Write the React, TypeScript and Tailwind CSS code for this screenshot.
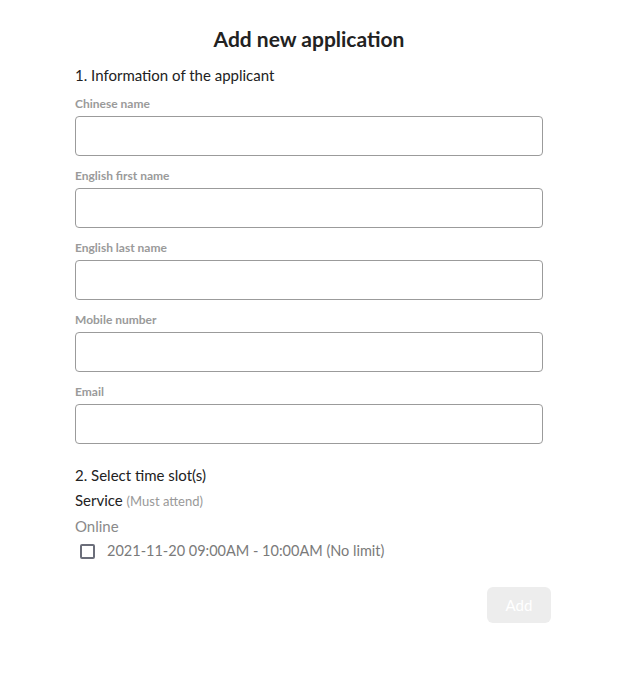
import React from "react";

export default function App() {
  const fields = ["Chinese name", "English first name", "English last name", "Mobile number", "Email"];

  return (
    <div className="min-h-[698px] w-full bg-white font-['Lato',sans-serif] text-[#222]">
      <div className="ml-[75px] w-[468px] pt-[26px]">
        <h1 className="text-center text-[21px] font-bold leading-[26px] text-[#222]">Add new application</h1>

        <h2 className="mt-[14px] text-[15px] leading-[18px]">1. Information of the applicant</h2>

        <div className="mt-[13px] flex flex-col gap-[13px]">
          {fields.map((f) => (
            <div key={f}>
              <label className="block text-[12px] font-bold leading-[14px] text-[#9a9a9a]">{f}</label>
              <input className="mt-[5px] block h-[40px] w-full rounded-[4px] border border-[#9b9b9b] px-3 text-[14px] outline-none" />
            </div>
          ))}
        </div>

        <h2 className="mt-[22px] text-[15px] leading-[18px]">2. Select time slot(s)</h2>
        <div className="mt-[7px] text-[15px] leading-[18px]">
          Service <span className="text-[13px] text-[#999]">(Must attend)</span>
        </div>
        <div className="mt-[7px] text-[15px] leading-[18px] text-[#8a8a8a]">Online</div>
        <label className="mt-[7px] flex items-center gap-[12px] pl-[5px] text-[14.5px] leading-[18px] text-[#7a7a7a]">
          <span className="h-[15px] w-[15px] rounded-[2px] border-2 border-[#6b6e7a]" />
          2021-11-20 09:00AM - 10:00AM (No limit)
        </label>

        <div className="mt-[27px] flex justify-end -mr-[8px]">
          <button className="h-[36px] w-[64px] rounded-[6px] bg-[#ededed] text-[15px] text-white">Add</button>
        </div>
      </div>
    </div>
  );
}
